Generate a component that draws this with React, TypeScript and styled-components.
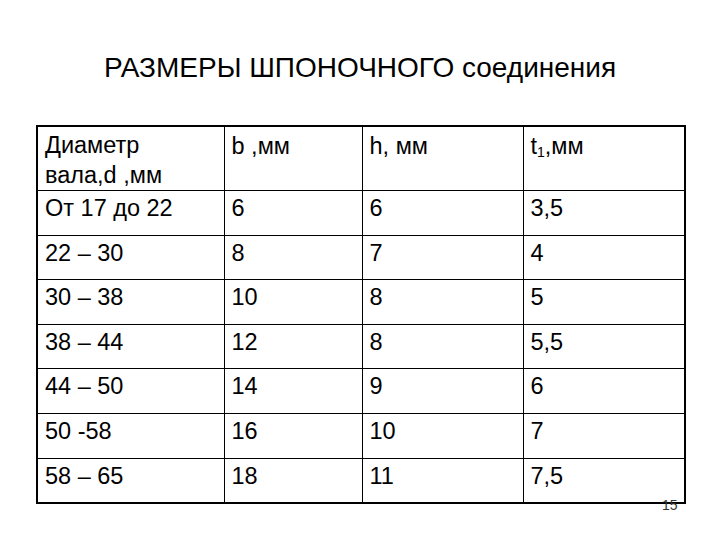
import React from "react";
import styled, { createGlobalStyle } from "styled-components";

const GlobalStyle = createGlobalStyle`
  html, body {
    margin: 0;
    padding: 0;
    background: #ffffff;
  }
  body {
    font-family: "Liberation Sans", Arial, sans-serif;
    color: #000;
  }
`;

const Slide = styled.div`
  position: relative;
  width: 720px;
  height: 540px;
  box-sizing: border-box;
  padding: 50px 36px 0 36px;
  background: #fff;
`;

const Title = styled.h1`
  margin: 0;
  height: 75px;
  font-size: 28px;
  font-weight: normal;
  text-align: center;
  line-height: 36px;
`;

const Table = styled.table`
  width: 648px;
  border-collapse: collapse;
  table-layout: fixed;
  border: 2px solid #000;
`;

const Cell = styled.td<{ $tall?: boolean }>`
  border: 1px solid #000;
  height: ${(p) => (p.$tall ? 63 : 44.6)}px;
  box-sizing: border-box;
  padding: ${(p) => (p.$tall ? 4 : 2)}px 7px 0 7px;
  vertical-align: top;
  font-size: 23.5px;
  line-height: 30px;
  white-space: nowrap;
`;

const Line = styled.div`
  line-height: 29.5px;
`;

const Sub = styled.sub`
  font-size: 14px;
  vertical-align: -3px;
`;

const PageNo = styled.span`
  position: absolute;
  left: 662px;
  top: 497px;
  font-size: 14px;
  color: #333;
`;

const rows: string[][] = [
  ["22 – 30", "8", "7", "4"],
  ["30 – 38", "10", "8", "5"],
  ["38 – 44", "12", "8", "5,5"],
  ["44 – 50", "14", "9", "6"],
  ["50 -58", "16", "10", "7"],
  ["58 – 65", "18", "11", "7,5"],
];

export default function App() {
  return (
    <>
      <GlobalStyle />
      <Slide>
        <Title>РАЗМЕРЫ ШПОНОЧНОГО соединения</Title>
        <Table>
          <colgroup>
            <col style={{ width: 187 }} />
            <col style={{ width: 138 }} />
            <col style={{ width: 161 }} />
            <col style={{ width: 162 }} />
          </colgroup>
          <tbody>
            <tr>
              <Cell $tall>
                <Line>Диаметр</Line>
                <Line>вала,d ,мм</Line>
              </Cell>
              <Cell $tall>b ,мм</Cell>
              <Cell $tall>h, мм</Cell>
              <Cell $tall>
                t<Sub>1</Sub>,мм
              </Cell>
            </tr>
            <tr>
              <Cell>От 17 до 22</Cell>
              <Cell>6</Cell>
              <Cell>6</Cell>
              <Cell>3,5</Cell>
            </tr>
            {rows.map((r, i) => (
              <tr key={i}>
                {r.map((c, j) => (
                  <Cell key={j}>{c}</Cell>
                ))}
              </tr>
            ))}
          </tbody>
        </Table>
        <PageNo>15</PageNo>
      </Slide>
    </>
  );
}
